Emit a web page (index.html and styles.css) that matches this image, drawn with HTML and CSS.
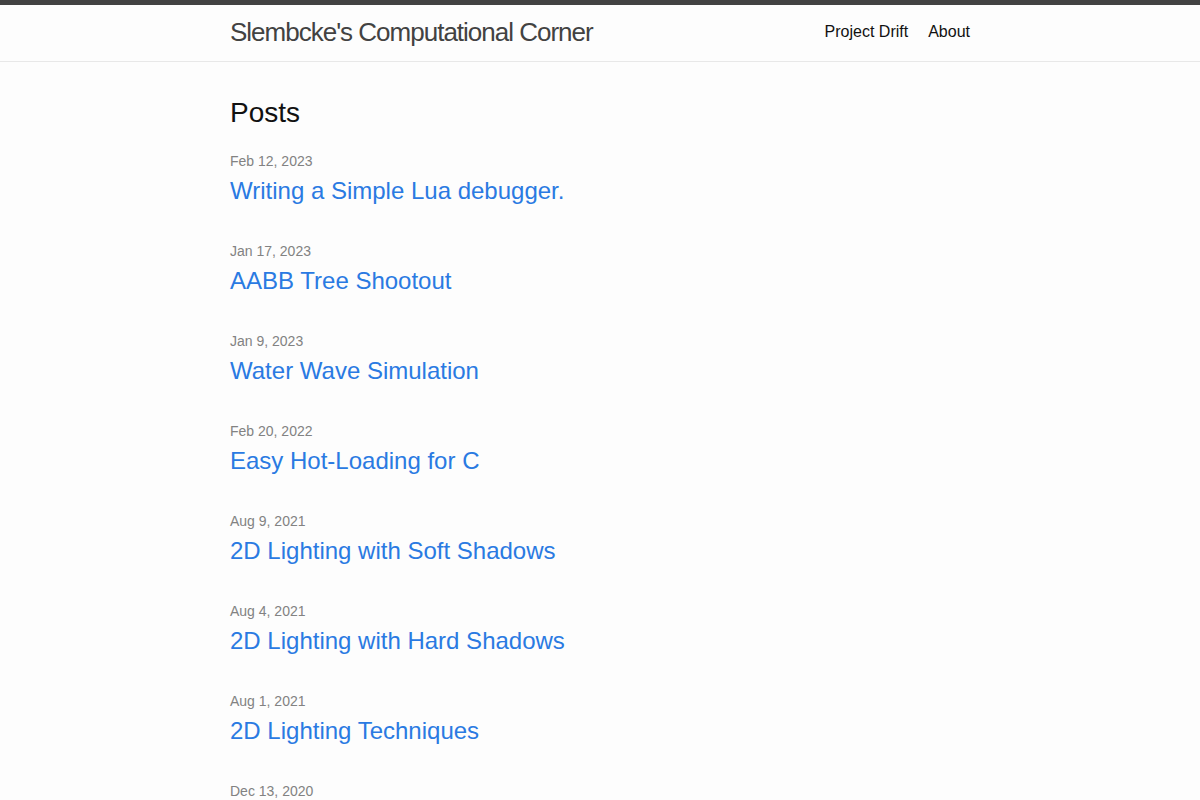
FILE: index.html
```html
<!DOCTYPE html>
<html lang="en">
<head>
<meta charset="utf-8">
<title>Slembcke's Computational Corner</title>
<link rel="stylesheet" href="styles.css">
</head>
<body>
<header class="site-header">
  <div class="wrapper header-row">
    <a class="site-title" href="#">Slembcke's Computational Corner</a>
    <nav class="site-nav">
      <a class="page-link" href="#">Project Drift</a>
      <a class="page-link" href="#">About</a>
    </nav>
  </div>
</header>
<main class="page-content">
  <div class="wrapper">
    <h2 class="post-list-heading">Posts</h2>
    <ul class="post-list">
      <li><span class="post-meta">Feb 12, 2023</span><h3><a class="post-link" href="#">Writing a Simple Lua debugger.</a></h3></li>
      <li><span class="post-meta">Jan 17, 2023</span><h3><a class="post-link" href="#">AABB Tree Shootout</a></h3></li>
      <li><span class="post-meta">Jan 9, 2023</span><h3><a class="post-link" href="#">Water Wave Simulation</a></h3></li>
      <li><span class="post-meta">Feb 20, 2022</span><h3><a class="post-link" href="#">Easy Hot-Loading for C</a></h3></li>
      <li><span class="post-meta">Aug 9, 2021</span><h3><a class="post-link" href="#">2D Lighting with Soft Shadows</a></h3></li>
      <li><span class="post-meta">Aug 4, 2021</span><h3><a class="post-link" href="#">2D Lighting with Hard Shadows</a></h3></li>
      <li><span class="post-meta">Aug 1, 2021</span><h3><a class="post-link" href="#">2D Lighting Techniques</a></h3></li>
      <li><span class="post-meta">Dec 13, 2020</span><h3><a class="post-link" href="#">Older Posts</a></h3></li>
    </ul>
  </div>
</main>
</body>
</html>
```

FILE: styles.css
```css
* { box-sizing: content-box; }
html, body { margin: 0; padding: 0; }
body {
  font: 400 16px/1.5 "Liberation Sans", Arial, sans-serif;
  color: #111;
  background: #fdfdfd;
}
a { text-decoration: none; }
.wrapper {
  max-width: 740px;
  margin: 0 auto;
  padding: 0 30px;
}
.site-header {
  border-top: 5px solid #424242;
  border-bottom: 1px solid #e8e8e8;
  min-height: 55.95px;
}
.header-row {
  display: flex;
  justify-content: space-between;
  align-items: flex-start;
}
.site-title {
  font-size: 26px;
  font-weight: 300;
  line-height: 54px;
  letter-spacing: -1px;
  color: #424242;
}
.site-nav {
  display: flex;
  gap: 20px;
  line-height: 54px;
}
.page-link {
  color: #111;
  line-height: 54px;
}
.page-content {
  padding: 30px 0;
}
.post-list-heading {
  font-size: 28px;
  font-weight: 400;
  line-height: 42px;
  margin: 0 0 15px;
}
.post-list {
  list-style: none;
  margin: 0;
  padding: 0;
}
.post-list > li { margin-bottom: 30px; }
.post-list h3 {
  margin: 0 0 15px;
  font-weight: 400;
}
.post-meta {
  font-size: 14px;
  color: #828282;
}
.post-link {
  display: block;
  font-size: 24px;
  line-height: 36px;
  color: #2a7ae2;
}
```
